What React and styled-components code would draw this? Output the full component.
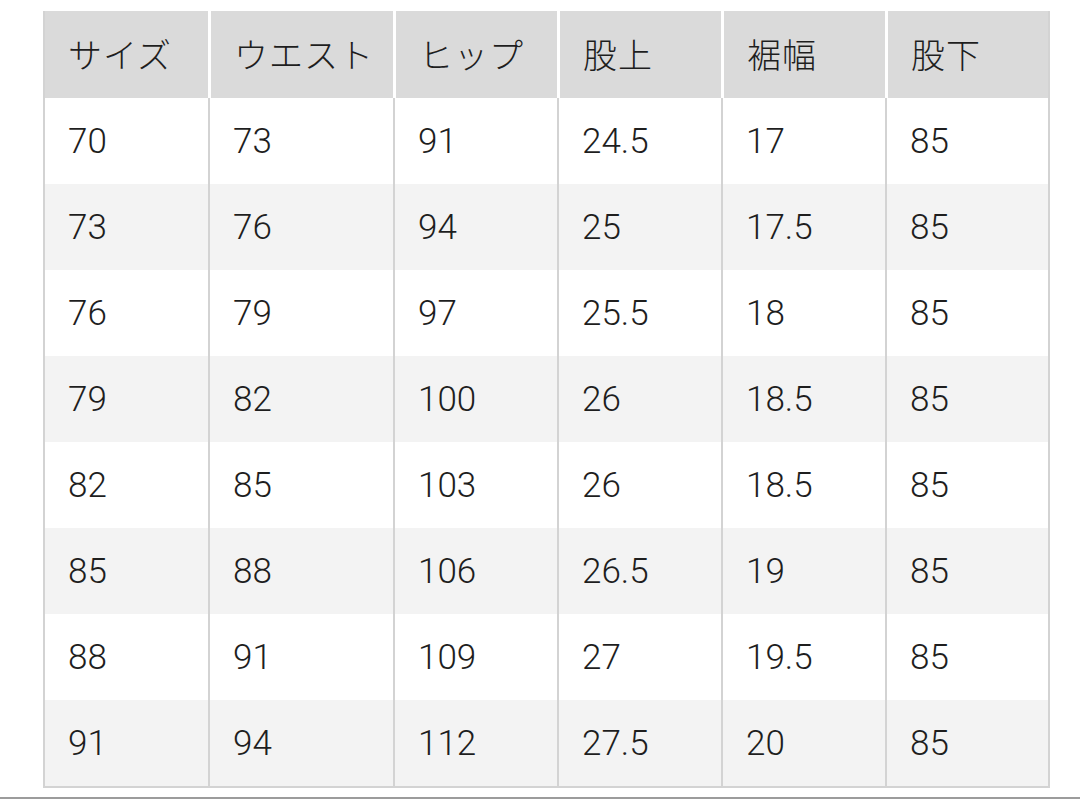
import React from 'react';
import styled, { createGlobalStyle } from 'styled-components';

const GlobalStyle = createGlobalStyle`
  html, body {
    margin: 0;
    padding: 0;
    background: #fff;
  }
  body {
    font-family: Roboto, "Liberation Sans", "Noto Sans CJK JP", sans-serif;
    color: #1e1e1e;
  }
`;

const StyledPage = styled.div`
  width: 1080px;
  height: 801px;
  padding-top: 11px;
  box-sizing: border-box;
  display: flex;
  flex-direction: column;
  overflow: hidden;
`;

const StyledTableWrapper = styled.div`
  margin-left: 43px;
  width: 1007px;
  box-sizing: border-box;
  border: 2px solid #d3d3d3;
  border-top: none;
`;

const StyledTable = styled.table`
  width: 100%;
  table-layout: fixed;
  border-collapse: separate;
  border-spacing: 0;
`;

const StyledHeadCell = styled.th`
  height: 87px;
  padding: 0 0 2px 23px;
  background: #dadada;
  text-align: left;
  font-family: "Noto Sans CJK JP", sans-serif;
  font-weight: 300;
  font-size: 34px;
  letter-spacing: 1px;
  color: #1e1e1e;
  border-left: ${({ first }) => (first ? 'none' : '3px solid #fff')};
  box-sizing: border-box;
  vertical-align: middle;
  white-space: nowrap;
`;

const StyledRow = styled.tr`
  background: ${({ striped }) => (striped ? '#f3f3f3' : '#fff')};
`;

const StyledCell = styled.td`
  height: 86px;
  padding: 0 0 0 23px;
  font-family: Roboto, "Liberation Sans", sans-serif;
  font-weight: 300;
  font-size: 35px;
  color: #1e1e1e;
  border-left: ${({ first }) => (first ? 'none' : '2px solid #d3d3d3')};
  box-sizing: border-box;
  vertical-align: middle;
`;

const StyledDivider = styled.div`
  margin-top: 9px;
  height: 2px;
  width: 100%;
  background: #9c9c9c;
`;

const columns = [
  { label: 'サイズ', width: 163 },
  { label: 'ウエスト', width: 185 },
  { label: 'ヒップ', width: 164 },
  { label: '股上', width: 164 },
  { label: '裾幅', width: 164 },
  { label: '股下', width: 163 },
];

const rows = [
  ['70', '73', '91', '24.5', '17', '85'],
  ['73', '76', '94', '25', '17.5', '85'],
  ['76', '79', '97', '25.5', '18', '85'],
  ['79', '82', '100', '26', '18.5', '85'],
  ['82', '85', '103', '26', '18.5', '85'],
  ['85', '88', '106', '26.5', '19', '85'],
  ['88', '91', '109', '27', '19.5', '85'],
  ['91', '94', '112', '27.5', '20', '85'],
];

const App = () => (
  <>
    <GlobalStyle />
    <StyledPage>
      <StyledTableWrapper>
        <StyledTable>
          <colgroup>
            {columns.map((col) => (
              <col key={col.label} style={{ width: col.width }} />
            ))}
          </colgroup>
          <thead>
            <tr>
              {columns.map((col, i) => (
                <StyledHeadCell key={col.label} first={i === 0}>
                  {col.label}
                </StyledHeadCell>
              ))}
            </tr>
          </thead>
          <tbody>
            {rows.map((row, r) => (
              <StyledRow key={r} striped={r % 2 === 1}>
                {row.map((value, i) => (
                  <StyledCell key={i} first={i === 0}>
                    {value}
                  </StyledCell>
                ))}
              </StyledRow>
            ))}
          </tbody>
        </StyledTable>
      </StyledTableWrapper>
      <StyledDivider />
    </StyledPage>
  </>
);

export default App;
